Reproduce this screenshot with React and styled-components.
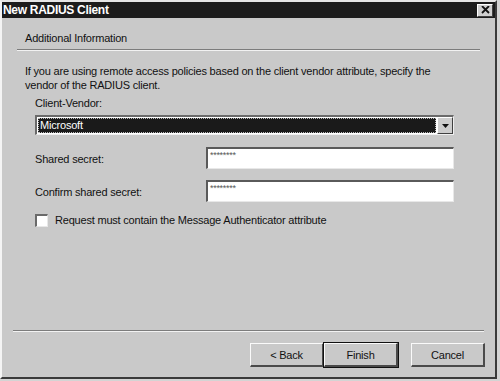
import React from 'react';
import styled, { createGlobalStyle } from 'styled-components';

const GlobalStyle = createGlobalStyle`
    html, body {
        margin: 0;
        padding: 0;
        background: #d4d4d4;
    }
    body {
        font-family: "Liberation Sans", Arial, sans-serif;
        font-size: 11px;
        letter-spacing: -0.2px;
        color: #111;
    }
`;

const App = () => {
    return (
        <Window>
            <GlobalStyle />
            <TitleBar>
                <Title>New RADIUS Client</Title>
                <CloseButton aria-label="Close">
                    <svg width="9" height="8" viewBox="0 0 9 8">
                        <path d="M1 0 L8 7 M8 0 L1 7" stroke="#111" strokeWidth="1.8" fill="none" />
                    </svg>
                </CloseButton>
            </TitleBar>

            <Header>
                <HeaderText>Additional Information</HeaderText>
            </Header>
            <Separator inset="15px" />

            <Content>
                <Paragraph>
                    If you are using remote access policies based on the client vendor attribute, specify the
                    <br />
                    vendor of the RADIUS client.
                </Paragraph>

                <Indented>
                    <Label>Client-Vendor:</Label>
                    <Select>
                        <SelectValue>Microsoft</SelectValue>
                        <ArrowButton>
                            <svg width="7" height="4" viewBox="0 0 7 4">
                                <path d="M0 0 H7 L3.5 4 Z" fill="#111" />
                            </svg>
                        </ArrowButton>
                    </Select>

                    <FieldRow top="12px">
                        <Label>Shared secret:</Label>
                        <TextBox>********</TextBox>
                    </FieldRow>

                    <FieldRow top="11px">
                        <Label>Confirm shared secret:</Label>
                        <TextBox>********</TextBox>
                    </FieldRow>

                    <CheckRow>
                        <CheckBox />
                        <Label>Request must contain the Message Authenticator attribute</Label>
                    </CheckRow>
                </Indented>
            </Content>

            <Separator inset="11px" />
            <Footer>
                <Button>&lt; Back</Button>
                <Button primary>Finish</Button>
                <Button gap="13px">Cancel</Button>
            </Footer>
        </Window>
    );
};

const Window = styled.div`
    width: 497px;
    height: 379px;
    box-sizing: border-box;
    background: #c9c9c9;
    border-top: 2px solid #e6e6e6;
    border-left: 2px solid #f4f4f4;
    border-right: 2px solid #3a3a3a;
    border-bottom: 2px solid #3a3a3a;
    display: flex;
    flex-direction: column;
`;

const TitleBar = styled.div`
    height: 16px;
    background: #1c1c1c;
    display: flex;
    align-items: center;
    justify-content: space-between;
    padding: 0 2px 0 0;
`;

const Title = styled.div`
    color: #fff;
    font-weight: bold;
    font-size: 12px;
    letter-spacing: -0.3px;
    padding-left: 1px;
`;

const CloseButton = styled.div`
    width: 16px;
    height: 13px;
    box-sizing: border-box;
    background: #cfcfcf;
    border-top: 1px solid #fff;
    border-left: 1px solid #fff;
    border-right: 1px solid #404040;
    border-bottom: 1px solid #404040;
    display: flex;
    align-items: center;
    justify-content: center;
`;

const Header = styled.div`
    height: 31px;
    display: flex;
    align-items: flex-end;
    padding: 0 0 4px 23px;
    box-sizing: border-box;
`;

const HeaderText = styled.div`
    line-height: 13px;
`;

const Separator = styled.div`
    height: 0;
    margin: 0 ${props => props.inset};
    border-top: 1px solid #7c7c7c;
    border-bottom: 1px solid #f2f2f2;
`;

const Content = styled.div`
    flex: 1;
    padding: 13px 0 0 23px;
`;

const Paragraph = styled.div`
    line-height: 14px;
`;

const Indented = styled.div`
    padding-left: 10px;
    margin-top: 4px;
`;

const Label = styled.div`
    line-height: 14px;
`;

const Select = styled.div`
    margin-top: 5px;
    width: 419px;
    height: 20px;
    box-sizing: border-box;
    background: #fff;
    border-top: 2px solid #6a6a6a;
    border-left: 2px solid #6a6a6a;
    border-right: 1px solid #efefef;
    border-bottom: 1px solid #efefef;
    display: flex;
    align-items: stretch;
`;

const SelectValue = styled.div`
    flex: 1;
    background: #1a1a1a;
    color: #fff;
    outline: 1px dotted #bbb;
    outline-offset: -1px;
    margin: 1px;
    padding-left: 2px;
    line-height: 14px;
`;

const ArrowButton = styled.div`
    width: 16px;
    box-sizing: border-box;
    background: #cdcdcd;
    border-top: 1px solid #fff;
    border-left: 1px solid #fff;
    border-right: 1px solid #404040;
    border-bottom: 1px solid #404040;
    display: flex;
    align-items: center;
    justify-content: center;
`;

const FieldRow = styled.div`
    display: flex;
    align-items: center;
    margin-top: ${props => props.top};

    & > ${Label} {
        width: 171px;
        padding-top: 1px;
    }
`;

const TextBox = styled.div`
    width: 248px;
    height: 22px;
    box-sizing: border-box;
    background: #fff;
    border-top: 2px solid #5a5a5a;
    border-left: 2px solid #5a5a5a;
    border-right: 1px solid #e8e8e8;
    border-bottom: 1px solid #e8e8e8;
    font-size: 9px;
    letter-spacing: -0.3px;
    color: #555;
    padding: 1px 0 0 2px;
`;

const CheckRow = styled.div`
    display: flex;
    align-items: center;
    gap: 7px;
    margin-top: 11px;
`;

const CheckBox = styled.div`
    width: 13px;
    height: 13px;
    box-sizing: border-box;
    background: #fff;
    border-top: 2px solid #6a6a6a;
    border-left: 2px solid #6a6a6a;
    border-right: 1px solid #e8e8e8;
    border-bottom: 1px solid #e8e8e8;
`;

const Footer = styled.div`
    display: flex;
    justify-content: flex-end;
    padding: 11px 10px 10px 0;
`;

const Button = styled.div`
    width: 74px;
    height: 24px;
    box-sizing: border-box;
    margin-left: ${props => props.gap || '0'};
    background: #c9c9c9;
    border-top: 1px solid #fafafa;
    border-left: 1px solid #fafafa;
    border-right: 2px solid #4a4a4a;
    border-bottom: 2px solid #4a4a4a;
    outline: ${props => props.primary ? '1px solid #111' : 'none'};
    outline-offset: 0;
    display: flex;
    align-items: center;
    justify-content: center;
    font-size: 11px;
`;

export default App;
